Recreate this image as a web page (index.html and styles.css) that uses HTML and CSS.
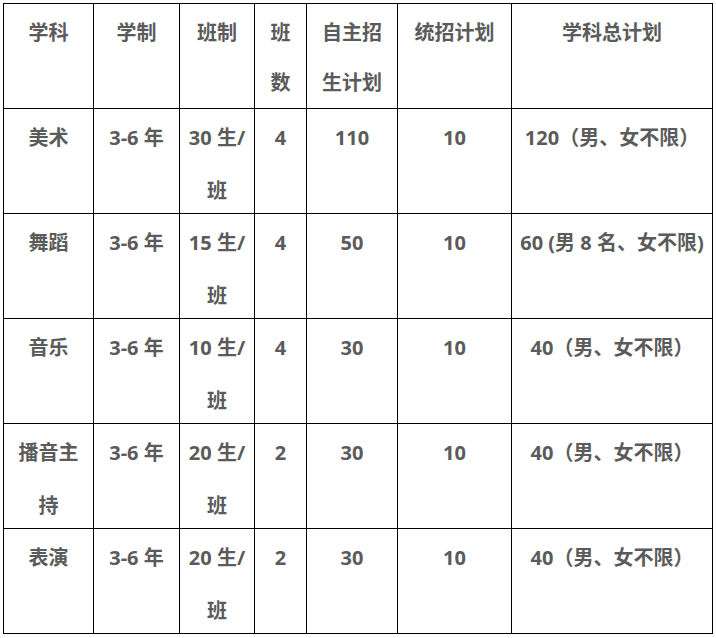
FILE: index.html
```html
<!DOCTYPE html>
<html lang="zh-CN">
<head>
<meta charset="utf-8">
<link rel="stylesheet" href="styles.css">
</head>
<body>
<table class="plan">
  <colgroup>
    <col class="c1"><col class="c2"><col class="c3"><col class="c4"><col class="c5"><col class="c6"><col class="c7">
  </colgroup>
  <tr class="head">
    <td><div class="cell">学科</div></td><td><div class="cell">学制</div></td><td><div class="cell">班制</div></td><td><div class="cell">班<br>数</div></td><td><div class="cell">自主招<br>生计划</div></td><td><div class="cell">统招计划</div></td><td><div class="cell">学科总计划</div></td>
  </tr>
  <tr>
    <td><div class="cell">美术</div></td><td><div class="cell">3-6 年</div></td><td><div class="cell">30 生/<br>班</div></td><td><div class="cell">4</div></td><td><div class="cell">110</div></td><td><div class="cell">10</div></td><td><div class="cell">120（男、女不限）</div></td>
  </tr>
  <tr>
    <td><div class="cell">舞蹈</div></td><td><div class="cell">3-6 年</div></td><td><div class="cell">15 生/<br>班</div></td><td><div class="cell">4</div></td><td><div class="cell">50</div></td><td><div class="cell">10</div></td><td><div class="cell">60 (男 8 名、女不限)</div></td>
  </tr>
  <tr>
    <td><div class="cell">音乐</div></td><td><div class="cell">3-6 年</div></td><td><div class="cell">10 生/<br>班</div></td><td><div class="cell">4</div></td><td><div class="cell">30</div></td><td><div class="cell">10</div></td><td><div class="cell">40（男、女不限）</div></td>
  </tr>
  <tr>
    <td><div class="cell">播音主<br>持</div></td><td><div class="cell">3-6 年</div></td><td><div class="cell">20 生/<br>班</div></td><td><div class="cell">2</div></td><td><div class="cell">30</div></td><td><div class="cell">10</div></td><td><div class="cell">40（男、女不限）</div></td>
  </tr>
  <tr>
    <td><div class="cell">表演</div></td><td><div class="cell">3-6 年</div></td><td><div class="cell">20 生/<br>班</div></td><td><div class="cell">2</div></td><td><div class="cell">30</div></td><td><div class="cell">10</div></td><td><div class="cell">40（男、女不限）</div></td>
  </tr>
</table>
</body>
</html>
```
FILE: styles.css
```css
html, body {
  background: #ffffff;
}
body {
  margin: 3px;
  font-family: "Open Sans", "Noto Sans CJK SC", sans-serif;
  font-weight: 700;
  font-size: 20px;
  color: #5b5b5b;
}
.plan {
  border-collapse: collapse;
  table-layout: fixed;
  width: 709px;
}
.c1 { width: 90px; }
.c2 { width: 86px; }
.c3 { width: 75px; }
.c4 { width: 52px; }
.c5 { width: 91px; }
.c6 { width: 114px; }
.c7 { width: 201px; }
.plan td {
  border: 1px solid #000000;
  padding: 0;
  text-align: center;
  vertical-align: top;
  white-space: nowrap;
}
.cell {
  box-sizing: border-box;
  height: 104px;
  padding-top: 2px;
  line-height: 53px;
}
.head .cell {
  padding-top: 4px;
  line-height: 50px;
}
```
